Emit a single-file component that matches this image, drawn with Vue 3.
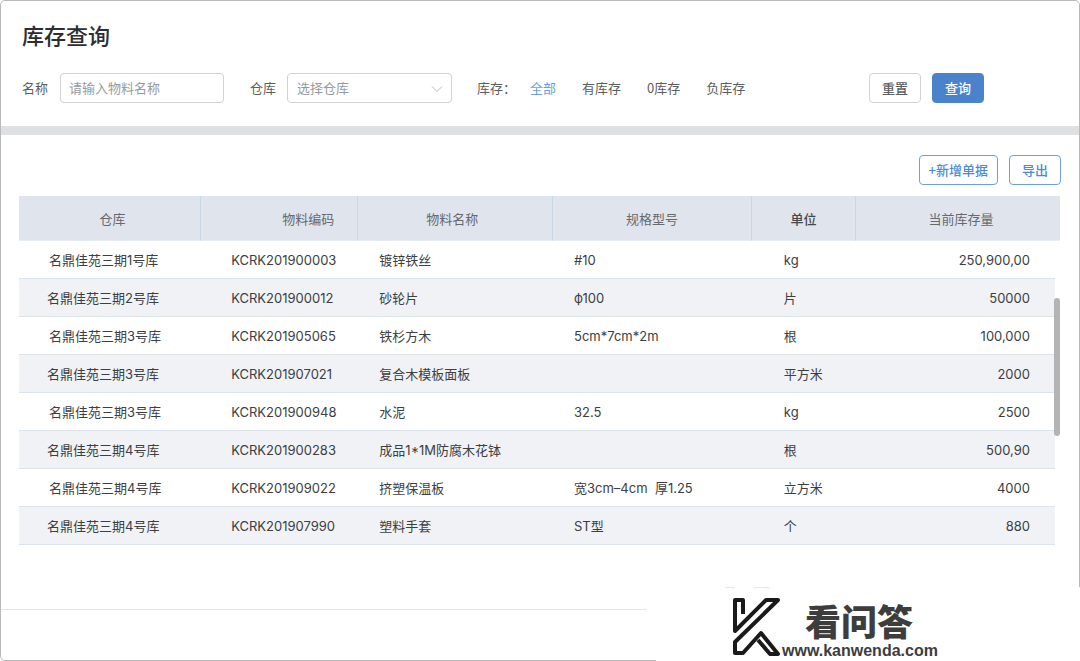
<script setup>
import { ref } from 'vue'

const name = ref('')
const warehouse = ref('')
const stock = ref('全部')
const stockOptions = ['全部', '有库存', '0库存', '负库存']
const rows = [
  ['名鼎佳苑三期1号库', 'KCRK201900003', '镀锌铁丝', '#10', 'kg', '250,900,00'],
  ['名鼎佳苑三期2号库', 'KCRK201900012', '砂轮片', 'ф100', '片', '50000'],
  ['名鼎佳苑三期3号库', 'KCRK201905065', '铁杉方木', '5cm*7cm*2m', '根', '100,000'],
  ['名鼎佳苑三期3号库', 'KCRK201907021', '复合木模板面板', '', '平方米', '2000'],
  ['名鼎佳苑三期3号库', 'KCRK201900948', '水泥', '32.5', 'kg', '2500'],
  ['名鼎佳苑三期4号库', 'KCRK201900283', '成品1*1M防腐木花钵', '', '根', '500,90'],
  ['名鼎佳苑三期4号库', 'KCRK201909022', '挤塑保温板', '宽3cm–4cm  厚1.25', '立方米', '4000'],
  ['名鼎佳苑三期4号库', 'KCRK201907990', '塑料手套', 'ST型', '个', '880'],
]
</script>

<template>
  <main class="page">
    <header class="head">
      <h1>库存查询</h1>
      <form class="filters" @submit.prevent>
        <label for="name">名称</label>
        <input id="name" v-model="name" class="field name-field" type="text" placeholder="请输入物料名称" />
        <label for="warehouse">仓库</label>
        <div class="select-wrap">
          <select id="warehouse" v-model="warehouse" class="field">
            <option value="">选择仓库</option>
            <option>名鼎佳苑三期1号库</option>
            <option>名鼎佳苑三期2号库</option>
          </select>
          <svg class="chevron" width="12" height="8" viewBox="0 0 12 8" aria-hidden="true">
            <path d="M1 1.5 L6 6.5 L11 1.5" />
          </svg>
        </div>
        <span class="stock-label">库存：</span>
        <div class="stock">
          <button
            v-for="option in stockOptions"
            :key="option"
            type="button"
            class="option"
            :class="{ active: option === stock }"
            @click="stock = option"
          >{{ option }}</button>
        </div>
        <div class="actions">
          <button type="reset" class="btn">重置</button>
          <button type="submit" class="btn primary">查询</button>
        </div>
      </form>
    </header>

    <section class="content">
      <div class="toolbar">
        <button type="button" class="btn outline">+新增单据</button>
        <button type="button" class="btn outline">导出</button>
      </div>
      <div class="table-wrap">
        <table>
          <colgroup>
            <col class="c1" /><col class="c2" /><col class="c3" /><col class="c4" /><col class="c5" /><col /><col class="gutter" />
          </colgroup>
          <thead>
            <tr>
              <th>仓库</th>
              <th class="code">物料编码</th>
              <th class="material">物料名称</th>
              <th>规格型号</th>
              <th class="unit">单位</th>
              <th colspan="2">当前库存量</th>
            </tr>
          </thead>
          <tbody>
            <tr v-for="row in rows" :key="row[1]">
              <td v-for="(cell, i) in row" :key="i">{{ cell }}</td>
              <td class="gutter"></td>
            </tr>
          </tbody>
        </table>
        <div class="thumb"></div>
      </div>
    </section>

    <footer class="foot"></footer>

    <aside class="brand">
      <svg class="mark" width="60" height="74" viewBox="0 0 60 74" aria-hidden="true">
        <path class="faint" d="M1 1 Q6 -0.5 11 1 M30 1 Q38 -0.5 46 1" />
        <path d="M19 27 V13 H11 V44 L42 13 H54 L11 55 V66 H19 L37 46 L54 67 H46 L34 53" />
      </svg>
      <strong class="brand-name">看问答</strong>
      <span class="brand-url">www.kanwenda.com</span>
    </aside>
  </main>
</template>

<style>
body {
  margin: 0;
  background: #fff;
}
</style>

<style scoped>
* {
  box-sizing: border-box;
}
.page {
  position: relative;
  display: flex;
  flex-direction: column;
  min-height: 100vh;
  border: 1px solid #b9b9b9;
  border-radius: 5px;
  background: #fff;
  color: #3c3e42;
  font: 13px/20px Inter, "Noto Sans CJK SC", sans-serif;
}
button,
input,
select {
  margin: 0;
  font-family: "Noto Sans CJK SC", sans-serif;
  font-size: 13px;
  line-height: 20px;
}
.head {
  padding: 17px 21px 23px;
  border-bottom: 9px solid #dfe0e2;
  font-family: "Noto Sans CJK SC", sans-serif;
}
h1 {
  margin: 0 0 23px;
  font-size: 22px;
  line-height: 32px;
  font-weight: 500;
  color: #2c2e32;
}
.filters {
  display: flex;
  align-items: center;
  color: #5c5e62;
}
.field {
  height: 30px;
  border: 1px solid #d2d3d5;
  border-radius: 4px;
  background: #fff;
  color: #989a9e;
  padding: 0 9px;
  outline: none;
}
.field::placeholder {
  color: #989a9e;
  opacity: 1;
}
.name-field {
  width: 164px;
  padding: 0 8px 2px;
  margin: 0 26px 0 12px;
}
.select-wrap {
  position: relative;
  width: 165px;
  margin: 0 25px 0 11px;
}
.select-wrap .field {
  width: 100%;
  appearance: none;
}
.chevron {
  position: absolute;
  right: 9px;
  top: 12px;
  pointer-events: none;
}
.chevron path {
  fill: none;
  stroke: #b8babd;
}
.stock {
  display: flex;
  gap: 26px;
  margin-left: 14px;
}
.option {
  padding: 0;
  border: 0;
  background: none;
  color: #5c5e62;
}
.option.active {
  color: #6c9ce0;
}
.actions {
  display: flex;
  gap: 11px;
  margin-left: auto;
  margin-right: 74px;
}
.btn {
  height: 30px;
  padding: 0 12px;
  border: 1px solid #d2d3d5;
  border-radius: 4px;
  background: #fff;
  color: #5c5e62;
  font-weight: 500;
}
.btn.primary {
  border-color: #4a82cc;
  background: #4a82cc;
  color: #fff;
}
.btn.outline {
  border-color: #6ca0e4;
  color: #4c8ad6;
}
.content {
  flex: 1;
  padding: 20px 18px 0 18px;
}
.toolbar {
  display: flex;
  justify-content: flex-end;
  gap: 11px;
  margin-bottom: 11px;
}
.toolbar .btn:first-child {
  padding: 0 9px;
}
.table-wrap {
  position: relative;
  margin-right: 1px;
}
table {
  width: 100%;
  table-layout: fixed;
  border-collapse: separate;
  border-spacing: 0;
}
.c1 { width: 17.5%; }
.c2 { width: 15.1%; }
.c3 { width: 18.7%; }
.c4 { width: 19.1%; }
.c5 { width: 10%; }
.gutter { width: 5px; }
th {
  height: 45px;
  padding: 2px 3px 0;
  border-right: 1px solid #c9d8e4;
  border-bottom: 1px solid #e6edf2;
  background: #e0e5ed;
  color: #66696e;
  font-family: "Noto Sans CJK SC", sans-serif;
  font-weight: 400;
}
th:first-child,
th:last-child {
  padding-left: 9px;
}
th:last-child {
  border-right: 0;
}
th.code {
  text-align: right;
  padding-right: 23px;
}
th.material {
  padding-right: 9px;
}
th.unit {
  color: #46484c;
  font-weight: 500;
}
td {
  height: 38px;
  padding: 0;
  border-bottom: 1px solid #dbe4ea;
  white-space: pre;
}
td:nth-child(1) { padding-left: 30px; }
tr:nth-child(even) td:nth-child(1) { padding-left: 28px; }
td:nth-child(2) { padding-left: 30px; }
td:nth-child(3),
td:nth-child(4) { padding-left: 21px; }
td:nth-child(5) { padding-left: 32px; }
td:nth-child(6) {
  padding-right: 25px;
  text-align: right;
}
tbody tr:nth-child(even) td {
  background: #f0f2f6;
}
tbody tr td.gutter {
  border: 0;
  background: #fff;
}
.thumb {
  position: absolute;
  right: 0;
  top: 102px;
  width: 6px;
  height: 138px;
  border-radius: 3px;
  background: #b4b4b4;
}
.foot {
  height: 51px;
  margin-right: 433px;
  border-top: 1px solid #e2e3e5;
}
.brand {
  position: absolute;
  right: -1px;
  bottom: -1px;
  width: 424px;
  height: 74px;
  background: #fff;
  color: #3d3d3d;
}
.mark {
  position: absolute;
  left: 68px;
  top: 0;
  fill: none;
  stroke: #1a1a1a;
  stroke-width: 4;
  stroke-linejoin: round;
}
.mark .faint {
  stroke: #e2e2e2;
  stroke-width: 1;
}
.brand-name {
  position: absolute;
  left: 149px;
  top: 15px;
  font: 900 36px/36px "Noto Sans CJK SC", sans-serif;
}
.brand-url {
  position: absolute;
  left: 126px;
  top: 56px;
  font: 700 16px/16px "Liberation Sans", Arial, sans-serif;
}
</style>
